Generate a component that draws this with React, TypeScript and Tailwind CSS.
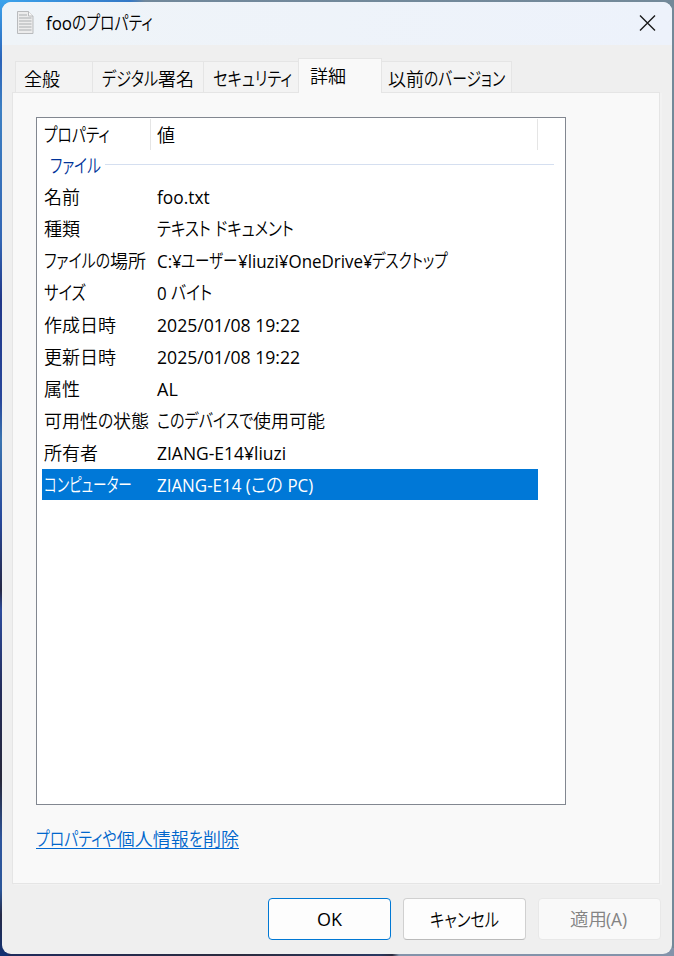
import { useLayoutEffect, useRef } from "react";
import { clsx } from "clsx";

const KANA = /([\u3040-\u30ff]+)/;
const CJK = /[\u3040-\u9fff]/;
const LATIN_RATIO = 0.94;

/** One line of text whose kana are condensed so that the line takes `width` pixels. */
function Line({ text, width, className }: { text: string; width: number; className?: string }) {
  const ref = useRef<HTMLSpanElement>(null);
  const parts = text.split(/([\u3040-\u30ff]+|[\u4e00-\u9fff]+)/).filter(Boolean);
  useLayoutEffect(() => {
    const fit = () => {
      const spans = Array.from(ref.current?.children ?? []) as HTMLElement[];
      const kinds = spans.map((s) => s.dataset.kind);
      const natural = spans.map(
        (s, i) => (s.firstElementChild as HTMLElement).offsetWidth * (kinds[i] === "latin" ? LATIN_RATIO : 1),
      );
      const kanaSum = natural.reduce((a, w, i) => a + (kinds[i] === "kana" ? w : 0), 0);
      const rest = natural.reduce((a, w, i) => a + (kinds[i] === "kana" ? 0 : w), 0);
      spans.forEach((s, i) => {
        const k = kanaSum ? (kinds[i] === "kana" ? (width - rest) / kanaSum : 1) : width / rest;
        s.style.width = `${natural[i] * k}px`;
        const scale = k * (kinds[i] === "latin" ? LATIN_RATIO : 1);
        (s.firstElementChild as HTMLElement).style.transform = `scaleX(${scale})`;
      });
    };
    fit();
    document.fonts?.ready.then(fit);
  }, [text, width]);
  return (
    <span ref={ref} className={clsx("inline-flex h-6 items-baseline whitespace-pre leading-6", className)}>
      {parts.map((p, i) => {
        const kind = KANA.test(p) ? "kana" : CJK.test(p) ? "kanji" : "latin";
        return (
          <span key={i} data-kind={kind} className="inline-block">
            <span
              className={clsx(
                "inline-block origin-left",
                kind === "kana" &&
                  "font-['Noto_Sans_CJK_JP',sans-serif] text-[19px] font-[350] [font-feature-settings:'palt']",
                kind === "kanji" && "font-['Noto_Sans_CJK_JP',sans-serif] text-[18px] font-[350]",
                kind === "latin" && "font-['Open_Sans','Noto_Sans_CJK_JP',sans-serif] text-[18px] font-normal",
              )}
            >
              {p}
            </span>
          </span>
        );
      })}
    </span>
  );
}

const rows: [string, number, string, number][] = [
  ["名前", 36, "foo.txt", 53],
  ["種類", 36, "テキスト ドキュメント", 137],
  ["ファイルの場所", 102, "C:¥ユーザー¥liuzi¥OneDrive¥デスクトップ", 291],
  ["サイズ", 42, "0 バイト", 55],
  ["作成日時", 72, "2025/01/08 19:22", 143],
  ["更新日時", 72, "2025/01/08 19:22", 143],
  ["属性", 36, "AL", 21],
  ["可用性の状態", 105, "このデバイスで使用可能", 168],
  ["所有者", 54, "ZIANG-E14¥liuzi", 129],
  ["コンピューター", 88, "ZIANG-E14 (この PC)", 156],
];

function Tab({ text, width, className }: { text: string; width: number; className: string }) {
  return (
    <div className={clsx("h-[31px] border-r border-t border-[#e5e5e5] bg-[#f3f3f3] pt-[4px]", className)}>
      <Line text={text} width={width} />
    </div>
  );
}

function DocIcon() {
  return (
    <svg width="17" height="23" viewBox="0 0 17 23" fill="none">
      <path d="M.5.5h11l4.500 4.500v17.500H.5z" fill="#ececec" stroke="#b9bbbd" />
      <path d="M11.500.5v4.500h4.500" fill="#f8f8f8" stroke="#b9bbbd" />
      <path
        d="M2 4h8M2 7h12.500M2 10h12.500M2 13h12.500M2 16h12.500M2 19h12.500"
        stroke="#c0c2c4"
        strokeWidth="1.500"
      />
    </svg>
  );
}

export default function App() {
  return (
    <div className="h-[956px] w-[674px] bg-[linear-gradient(90deg,#3ba3ec_0,#3478c6_130px,#71889b_145px,#738999_100%)] text-black">
      <div className="h-[956px] bg-[linear-gradient(180deg,#3ba3ec_0,#2c63b8_60px,#3c7fc2_110px,#3265b3_240px,#203788_300px,#27469a_400px,#3a74b0_440px,#26479a_520px,#252744_590px,#2c4b9c_610px,#232c5a_690px,#262739_780px,#2d559d_840px,#2b5699_890px,#262a47_915px,#123173_956px)] bg-[length:8px_956px] bg-no-repeat">
        <div className="h-[956px] bg-[linear-gradient(90deg,#1f2b5c_0,#2b2b3e_34%,#293861_55%,#2b2b3e_57%,#8393aa_58%)] bg-[length:674px_8px] bg-[position:8px_948px] bg-no-repeat p-[2px]">
          <div className="flex h-[952px] w-[670px] flex-col overflow-hidden rounded-[9px] bg-[#efefef]">
            <header className="flex h-[43px] shrink-0 items-center bg-linear-to-r from-[#eff4f8] to-[#edf2fb] pb-[3px] pl-[15px] pr-[16px]">
              <DocIcon />
              <Line text="fooのプロパティ" width={107} className="ml-[12px]" />
              <svg className="ml-auto" width="17" height="17" viewBox="0 0 17 17" stroke="#1a1a1a" strokeWidth="1.4">
                <path d="M1 1.500l15 15M16 1.500l-15 15" />
              </svg>
            </header>

            <main className="mt-[13px] flex flex-col pl-[10px]">
              <div className="relative z-10 flex h-[34px] items-end pl-[3px]">
                <Tab text="全般" width={36} className="w-[78px] border-l pl-[8px]" />
                <Tab text="デジタル署名" width={92} className="w-[111px] pl-[9px]" />
                <Tab text="セキュリティ" width={79} className="w-[94px] !border-r-0 pl-[9px]" />
                <div className="-mb-px h-[35px] w-[84px] border-x border-t border-[#e5e5e5] bg-[#f9f9f9] pl-[11px] pt-[4px]">
                  <Line text="詳細" width={36} />
                </div>
                <Tab text="以前のバージョン" width={117} className="w-[130px] pl-[6px]" />
              </div>

              <section className="h-[792px] w-[648px] border border-[#e5e5e5] bg-[#f9f9f9] pl-[23px] pt-[24px] shadow-[2px_1px_0_#f2f2f2]">
                <div className="h-[688px] w-[530px] border border-[#828790] bg-white">
                  <div className="flex h-[33px] pt-px">
                    <div className="h-[31px] w-[114px] border-r border-[#e5e5e5] pl-[7px] pt-[3px]">
                      <Line text="プロパティ" width={66} />
                    </div>
                    <div className="h-[31px] w-[387px] border-r border-[#e5e5e5] pl-[6px] pt-[3px]">
                      <Line text="値" width={18} />
                    </div>
                  </div>
                  <div className="flex h-[30px] items-center pb-[3px] pl-[13px] text-[#003399]">
                    <Line text="ファイル" width={51} />
                    <div className="ml-[4px] h-px w-[449px] bg-[#d5dff0]" />
                  </div>
                  {rows.map(([name, nameWidth, value, valueWidth], i) => (
                    <div
                      key={name}
                      className={clsx(
                        "ml-[5px] flex w-[496px] items-start pl-[2px] pt-[3px]",
                        i === rows.length - 1 ? "h-[31px] bg-[#0078d7] text-white" : "h-8",
                      )}
                    >
                      <div className="flex w-[113px]">
                        <Line text={name} width={nameWidth} />
                      </div>
                      <Line text={value} width={valueWidth} className={CJK.test(value) ? undefined : "mt-px"} />
                    </div>
                  ))}
                </div>
                <a className="mt-[21px] flex h-[23px] w-[203px] border-b border-[#0067d0] text-[#0066cc]">
                  <Line text="プロパティや個人情報を削除" width={203} />
                </a>
              </section>
            </main>

            <footer className="mt-[14px] flex gap-[12px] pl-[266px]">
              <button className="flex h-[42px] w-[123px] items-center justify-center rounded-[4px] border border-[#0078d4] bg-[#fdfdfd]">
                <Line text="OK" width={25} />
              </button>
              <button className="flex h-[42px] w-[123px] items-center justify-center rounded-[4px] border border-[#d0d0d0] border-b-[#bababa] bg-[#fdfdfd] pr-px">
                <Line text="キャンセル" width={69} />
              </button>
              <button className="flex h-[42px] w-[123px] items-center justify-center rounded-[4px] border border-[#e8e8e8] bg-[#f9f9f9] pb-[2px] pr-[2px] text-[#838383]">
                <Line text="適用(A)" width={58} />
              </button>
            </footer>
          </div>
        </div>
      </div>
    </div>
  );
}
